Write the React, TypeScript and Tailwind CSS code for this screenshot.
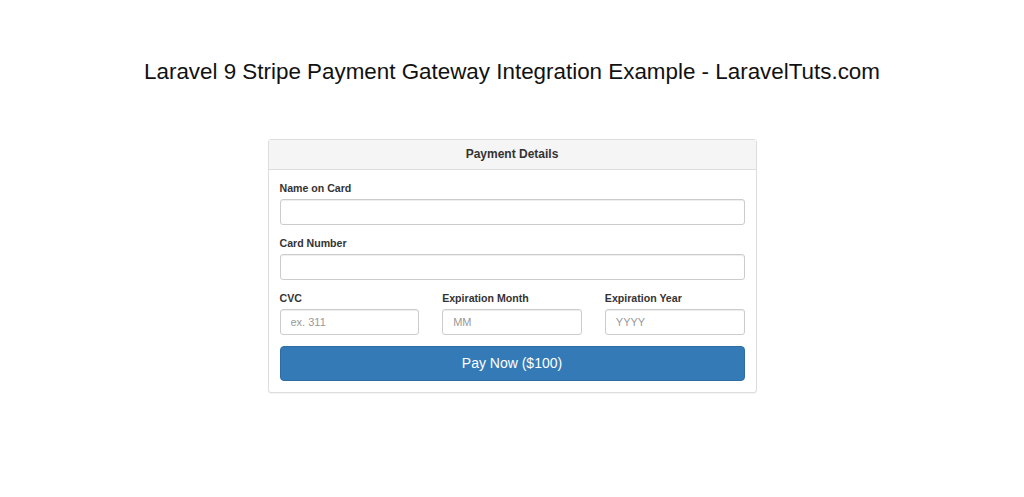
const Field = ({ label, placeholder }: { label: string; placeholder?: string }) => (
  <div className="flex flex-col">
    <label className="mb-[3px] text-[10.6px] leading-[15px] font-bold text-[#333]">{label}</label>
    <input
      type="text"
      placeholder={placeholder}
      className="h-[26px] w-full rounded-[3px] border border-[#ccc] bg-white px-[10px] text-[11px] text-[#555] shadow-[inset_0_1px_1px_rgba(0,0,0,0.075)] outline-none placeholder:text-[#999]"
    />
  </div>
);

export default function App() {
  return (
    <div className="min-h-[497px] w-full bg-white font-['Liberation_Sans',Arial,sans-serif]">
      <h1 className="pt-[60px] text-center text-[22.4px] leading-[24px] text-[#111]">
        Laravel 9 Stripe Payment Gateway Integration Example - LaravelTuts.com
      </h1>

      <div className="mx-auto mt-[55px] w-[489px] rounded-[3px] border border-[#ddd] bg-white shadow-[0_1px_1px_rgba(0,0,0,0.05)]">
        <div className="h-[30px] border-b border-[#ddd] bg-[#f5f5f5] text-center text-[12px] leading-[29px] font-bold text-[#333]">
          Payment Details
        </div>

        <div className="flex flex-col gap-[11px] px-[11px] pt-[11px] pb-[11px]">
          <Field label="Name on Card" />
          <Field label="Card Number" />
          <div className="grid grid-cols-3 gap-[23px]">
            <Field label="CVC" placeholder="ex. 311" />
            <Field label="Expiration Month" placeholder="MM" />
            <Field label="Expiration Year" placeholder="YYYY" />
          </div>
          <button className="h-[35px] w-full rounded-[4px] border border-[#2e6da4] bg-[#337ab7] text-[14px] text-white">
            Pay Now ($100)
          </button>
        </div>
      </div>
    </div>
  );
}
